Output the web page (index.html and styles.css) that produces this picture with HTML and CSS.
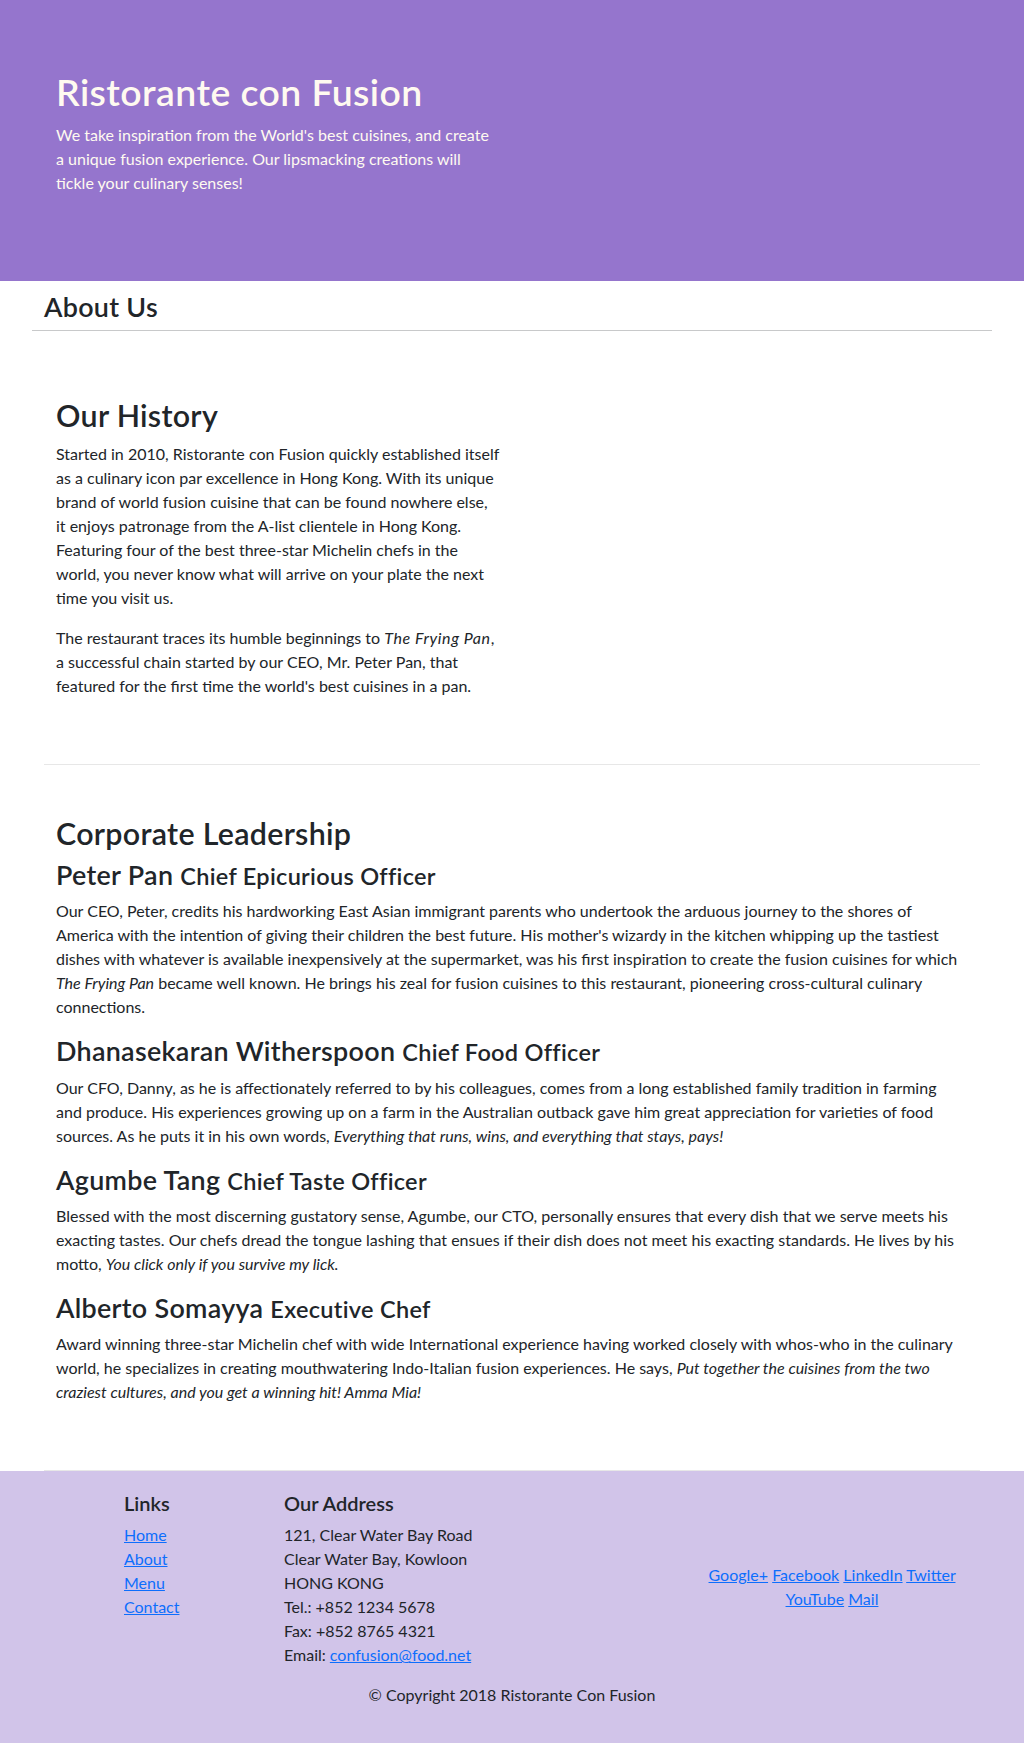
FILE: index.html
```html
<!DOCTYPE html>
<html lang="en">
<head>
<meta charset="utf-8">
<title>Ristorante con Fusion - About Us</title>
<link rel="stylesheet" href="styles.css">
</head>
<body>
<header class="jumbotron">
  <div class="container">
    <div class="row-header">
      <div class="col-half">
        <h1>Ristorante con Fusion</h1>
        <p>We take inspiration from the World's best cuisines, and create a unique fusion experience. Our lipsmacking creations will tickle your culinary senses!</p>
      </div>
    </div>
  </div>
</header>

<main class="container">
  <div class="page-title">
    <h3>About Us</h3>
    <hr>
  </div>

  <section class="row-content">
    <div class="col-half history">
      <h2>Our History</h2>
      <p>Started in 2010, Ristorante con Fusion quickly established itself as a culinary icon par excellence in Hong Kong. With its unique brand of world fusion cuisine that can be found nowhere else, it enjoys patronage from the A-list clientele in Hong Kong. Featuring four of the best three-star Michelin chefs in the world, you never know what will arrive on your plate the next time you visit us.</p>
      <p>The restaurant traces its humble beginnings to <em>The Frying Pan</em>, a successful chain started by our CEO, Mr. Peter Pan, that featured for the first time the world's best cuisines in a pan.</p>
    </div>
  </section>

  <section class="row-content">
    <div class="col-full">
      <h2>Corporate Leadership</h2>
      <ul class="leaders">
        <li>
          <h3>Peter Pan <small>Chief Epicurious Officer</small></h3>
          <p>Our CEO, Peter, credits his hardworking East Asian immigrant parents who undertook the arduous journey to the shores of America with the intention of giving their children the best future. His mother's wizardy in the kitchen whipping up the tastiest dishes with whatever is available inexpensively at the supermarket, was his first inspiration to create the fusion cuisines for which <em>The Frying Pan</em> became well known. He brings his zeal for fusion cuisines to this restaurant, pioneering cross-cultural culinary connections.</p>
        </li>
        <li>
          <h3>Dhanasekaran Witherspoon <small>Chief Food Officer</small></h3>
          <p>Our CFO, Danny, as he is affectionately referred to by his colleagues, comes from a long established family tradition in farming and produce. His experiences growing up on a farm in the Australian outback gave him great appreciation for varieties of food sources. As he puts it in his own words, <em>Everything that runs, wins, and everything that stays, pays!</em></p>
        </li>
        <li>
          <h3>Agumbe Tang <small>Chief Taste Officer</small></h3>
          <p>Blessed with the most discerning gustatory sense, Agumbe, our CTO, personally ensures that every dish that we serve meets his exacting tastes. Our chefs dread the tongue lashing that ensues if their dish does not meet his exacting standards. He lives by his motto, <em>You click only if you survive my lick.</em></p>
        </li>
        <li>
          <h3>Alberto Somayya <small>Executive Chef</small></h3>
          <p>Award winning three-star Michelin chef with wide International experience having worked closely with whos-who in the culinary world, he specializes in creating mouthwatering Indo-Italian fusion experiences. He says, <em>Put together the cuisines from the two craziest cultures, and you get a winning hit! Amma Mia!</em></p>
        </li>
      </ul>
    </div>
  </section>
</main>

<footer class="footer">
  <div class="footer-inner">
    <div class="footer-row">
      <div class="footer-links">
        <h5>Links</h5>
        <ul class="list-unstyled">
          <li><a href="#">Home</a></li>
          <li><a href="#">About</a></li>
          <li><a href="#">Menu</a></li>
          <li><a href="#">Contact</a></li>
        </ul>
      </div>
      <div class="footer-address">
        <h5>Our Address</h5>
        <address>
          121, Clear Water Bay Road<br>
          Clear Water Bay, Kowloon<br>
          HONG KONG<br>
          Tel.: +852 1234 5678<br>
          Fax: +852 8765 4321<br>
          Email: <a href="#">confusion@food.net</a>
        </address>
      </div>
      <div class="footer-social">
        <a href="#">Google+</a>
        <a href="#">Facebook</a>
        <a href="#">LinkedIn</a>
        <a href="#">Twitter</a>
        <a href="#">YouTube</a>
        <a href="#">Mail</a>
      </div>
    </div>
    <p class="copyright">© Copyright 2018 Ristorante Con Fusion</p>
  </div>
</footer>
</body>
</html>
```
FILE: styles.css
```css
* { box-sizing: border-box; }

body {
  margin: 0;
  font-family: Lato, "Noto Sans", sans-serif;
  font-size: 16px;
  line-height: 24px;
  color: #212529;
  background: #fff;
}

h1, h2, h3, h5 {
  margin: 0 0 8px;
  font-weight: 600;
  line-height: 1.2;
  letter-spacing: 0.3px;
}
h1 { font-size: 37.36px; letter-spacing: 0.45px; }
h2 { font-size: 30.4px; }
h3 { font-size: 26.9px; }
h5 { font-size: 20px; letter-spacing: 0; }
h3 small { font-size: 0.875em; }

p { margin: 0 0 16px; }

a { color: #0d6efd; text-decoration: underline; }

.container {
  width: 960px;
  margin: 0 auto;
  padding: 0 12px;
}

/* Jumbotron */
.jumbotron {
  background: #9575cd;
  color: floralwhite;
  padding: 70px 30px;
}
.row-header { margin: 0 auto; }
.col-half {
  padding: 0 12px;
  width: 468px;
}
.jumbotron h1 { color: floralwhite; }

.history em { letter-spacing: 0.6px; }

/* Page title */
.page-title {
  margin: 0 -12px;
}
.page-title h3 {
  margin: 10px 0 7px;
  padding: 0 12px;
}
.page-title hr {
  margin: 0 0 16px;
  border: 0;
  border-top: 1px solid #c8c9ca;
  height: 0;
}

/* Content rows */
.row-content {
  padding: 50px 0 50px;
  border-bottom: 1px solid #e7e7e7;
  min-height: 417px;
}
.col-full { padding: 0 12px; }

.leaders {
  list-style: none;
  margin: 0;
  padding: 0;
}
.leaders p { max-width: 906px; }

/* Footer */
.footer {
  background: #d1c4e9;
  padding: 20px 0;
}
.footer-inner {
  width: 960px;
  margin: 0 auto;
}
.footer-row {
  display: grid;
  grid-template-columns: 80px 160px 400px 320px;
}
.footer-row > div { padding: 0 12px; }
.footer-links { grid-column: 2; }
.list-unstyled {
  list-style: none;
  margin: 0 0 16px;
  padding: 0;
}
address {
  font-style: normal;
  margin: 0 0 16px;
}
.footer-social {
  align-self: center;
  text-align: center;
}
.copyright {
  text-align: center;
  margin: 0 0 16px;
}
```
